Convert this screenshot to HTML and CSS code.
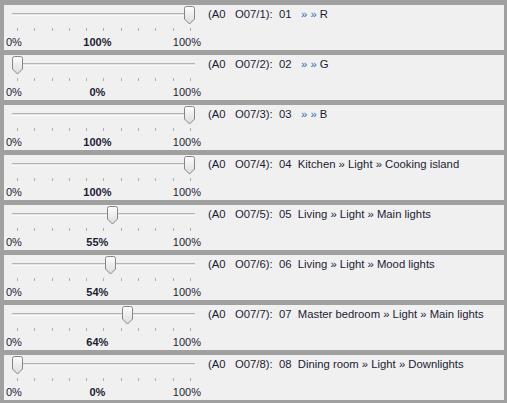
FILE: index.html
```html
<!DOCTYPE html>
<html>
<head>
<meta charset="utf-8">
<link rel="stylesheet" href="styles.css">
</head>
<body>
<div class="list">
  <div class="panel">
    <div class="slider">
      <div class="track"></div>
      <svg class="thumb" style="left:180px" width="11" height="19" viewBox="0 0 11 19"><defs><linearGradient id="g1" x1="0" y1="0" x2="0" y2="1"><stop offset="0" stop-color="#fdfdfd"/><stop offset="1" stop-color="#dcdcdc"/></linearGradient></defs><path d="M0.5,2.5 Q0.5,0.5 2.5,0.5 H8.5 Q10.5,0.5 10.5,2.5 V13 L5.5,18 L0.5,13 Z" fill="url(#g1)" stroke="#858585"/></svg>
      <div class="ticks"><i></i><i></i><i></i><i></i><i></i><i></i><i></i><i></i><i></i><i></i><i></i></div>
      <div class="labels"><span>0%</span><b>100%</b><span>100%</span></div>
    </div>
    <div class="name">(A0&nbsp;&nbsp; O07/1):&nbsp; 01&nbsp;&nbsp; <span class="sep">»</span> <span class="sep">»</span> R</div>
  </div>
  <div class="panel">
    <div class="slider">
      <div class="track"></div>
      <svg class="thumb" style="left:8px" width="11" height="19" viewBox="0 0 11 19"><path d="M0.5,2.5 Q0.5,0.5 2.5,0.5 H8.5 Q10.5,0.5 10.5,2.5 V13 L5.5,18 L0.5,13 Z" fill="url(#g1)" stroke="#858585"/></svg>
      <div class="ticks"><i></i><i></i><i></i><i></i><i></i><i></i><i></i><i></i><i></i><i></i><i></i></div>
      <div class="labels"><span>0%</span><b>0%</b><span>100%</span></div>
    </div>
    <div class="name">(A0&nbsp;&nbsp; O07/2):&nbsp; 02&nbsp;&nbsp; <span class="sep">»</span> <span class="sep">»</span> G</div>
  </div>
  <div class="panel">
    <div class="slider">
      <div class="track"></div>
      <svg class="thumb" style="left:180px" width="11" height="19" viewBox="0 0 11 19"><path d="M0.5,2.5 Q0.5,0.5 2.5,0.5 H8.5 Q10.5,0.5 10.5,2.5 V13 L5.5,18 L0.5,13 Z" fill="url(#g1)" stroke="#858585"/></svg>
      <div class="ticks"><i></i><i></i><i></i><i></i><i></i><i></i><i></i><i></i><i></i><i></i><i></i></div>
      <div class="labels"><span>0%</span><b>100%</b><span>100%</span></div>
    </div>
    <div class="name">(A0&nbsp;&nbsp; O07/3):&nbsp; 03&nbsp;&nbsp; <span class="sep">»</span> <span class="sep">»</span> B</div>
  </div>
  <div class="panel">
    <div class="slider">
      <div class="track"></div>
      <svg class="thumb" style="left:180px" width="11" height="19" viewBox="0 0 11 19"><path d="M0.5,2.5 Q0.5,0.5 2.5,0.5 H8.5 Q10.5,0.5 10.5,2.5 V13 L5.5,18 L0.5,13 Z" fill="url(#g1)" stroke="#858585"/></svg>
      <div class="ticks"><i></i><i></i><i></i><i></i><i></i><i></i><i></i><i></i><i></i><i></i><i></i></div>
      <div class="labels"><span>0%</span><b>100%</b><span>100%</span></div>
    </div>
    <div class="name">(A0&nbsp;&nbsp; O07/4):&nbsp; 04&nbsp; Kitchen » Light » Cooking island</div>
  </div>
  <div class="panel">
    <div class="slider">
      <div class="track"></div>
      <svg class="thumb" style="left:103px" width="11" height="19" viewBox="0 0 11 19"><path d="M0.5,2.5 Q0.5,0.5 2.5,0.5 H8.5 Q10.5,0.5 10.5,2.5 V13 L5.5,18 L0.5,13 Z" fill="url(#g1)" stroke="#858585"/></svg>
      <div class="ticks"><i></i><i></i><i></i><i></i><i></i><i></i><i></i><i></i><i></i><i></i><i></i></div>
      <div class="labels"><span>0%</span><b>55%</b><span>100%</span></div>
    </div>
    <div class="name">(A0&nbsp;&nbsp; O07/5):&nbsp; 05&nbsp; Living » Light » Main lights</div>
  </div>
  <div class="panel">
    <div class="slider">
      <div class="track"></div>
      <svg class="thumb" style="left:101px" width="11" height="19" viewBox="0 0 11 19"><path d="M0.5,2.5 Q0.5,0.5 2.5,0.5 H8.5 Q10.5,0.5 10.5,2.5 V13 L5.5,18 L0.5,13 Z" fill="url(#g1)" stroke="#858585"/></svg>
      <div class="ticks"><i></i><i></i><i></i><i></i><i></i><i></i><i></i><i></i><i></i><i></i><i></i></div>
      <div class="labels"><span>0%</span><b>54%</b><span>100%</span></div>
    </div>
    <div class="name">(A0&nbsp;&nbsp; O07/6):&nbsp; 06&nbsp; Living » Light » Mood lights</div>
  </div>
  <div class="panel">
    <div class="slider">
      <div class="track"></div>
      <svg class="thumb" style="left:118px" width="11" height="19" viewBox="0 0 11 19"><path d="M0.5,2.5 Q0.5,0.5 2.5,0.5 H8.5 Q10.5,0.5 10.5,2.5 V13 L5.5,18 L0.5,13 Z" fill="url(#g1)" stroke="#858585"/></svg>
      <div class="ticks"><i></i><i></i><i></i><i></i><i></i><i></i><i></i><i></i><i></i><i></i><i></i></div>
      <div class="labels"><span>0%</span><b>64%</b><span>100%</span></div>
    </div>
    <div class="name">(A0&nbsp;&nbsp; O07/7):&nbsp; 07&nbsp; Master bedroom » Light » Main lights</div>
  </div>
  <div class="panel">
    <div class="slider">
      <div class="track"></div>
      <svg class="thumb" style="left:8px" width="11" height="19" viewBox="0 0 11 19"><path d="M0.5,2.5 Q0.5,0.5 2.5,0.5 H8.5 Q10.5,0.5 10.5,2.5 V13 L5.5,18 L0.5,13 Z" fill="url(#g1)" stroke="#858585"/></svg>
      <div class="ticks"><i></i><i></i><i></i><i></i><i></i><i></i><i></i><i></i><i></i><i></i><i></i></div>
      <div class="labels"><span>0%</span><b>0%</b><span>100%</span></div>
    </div>
    <div class="name">(A0&nbsp;&nbsp; O07/8):&nbsp; 08&nbsp; Dining room » Light » Downlights</div>
  </div>
</div>
</body>
</html>
```
FILE: styles.css
```css
html, body {
  margin: 0;
  padding: 0;
  background: #a0a0a0;
}
body {
  padding: 5px 3px 0 4px;
  font-family: "Liberation Sans", Arial, sans-serif;
  font-size: 11px;
  color: #1c1c34;
}
.list {
  display: flex;
  flex-direction: column;
  gap: 5px;
}
.panel {
  height: 45px;
  background: #f0f0f0;
  display: flex;
}
.slider {
  position: relative;
  width: 200px;
  flex: none;
}
.track {
  margin: 8px 0 0 8px;
  width: 183px;
  height: 1px;
  background: #e4e4e4;
  border-top: 1px solid #b4b4b4;
  border-bottom: 1px solid #fafafa;
}
.thumb {
  position: absolute;
  top: 1px;
  display: block;
}
.ticks {
  margin: 12px 0 0 13px;
  width: 174px;
  height: 3px;
  display: flex;
  justify-content: space-between;
}
.ticks i {
  width: 1px;
  background: #b0b0b0;
}
.labels {
  margin: 5px 0 0 2px;
  width: 195px;
  display: flex;
  justify-content: space-between;
  line-height: 13px;
}
.labels b {
  font-weight: bold;
}
.name {
  padding: 3px 0 0 4px;
  line-height: 13px;
  font-size: 11.3px;
  white-space: nowrap;
}
.sep {
  color: #2f6ab8;
}
```
